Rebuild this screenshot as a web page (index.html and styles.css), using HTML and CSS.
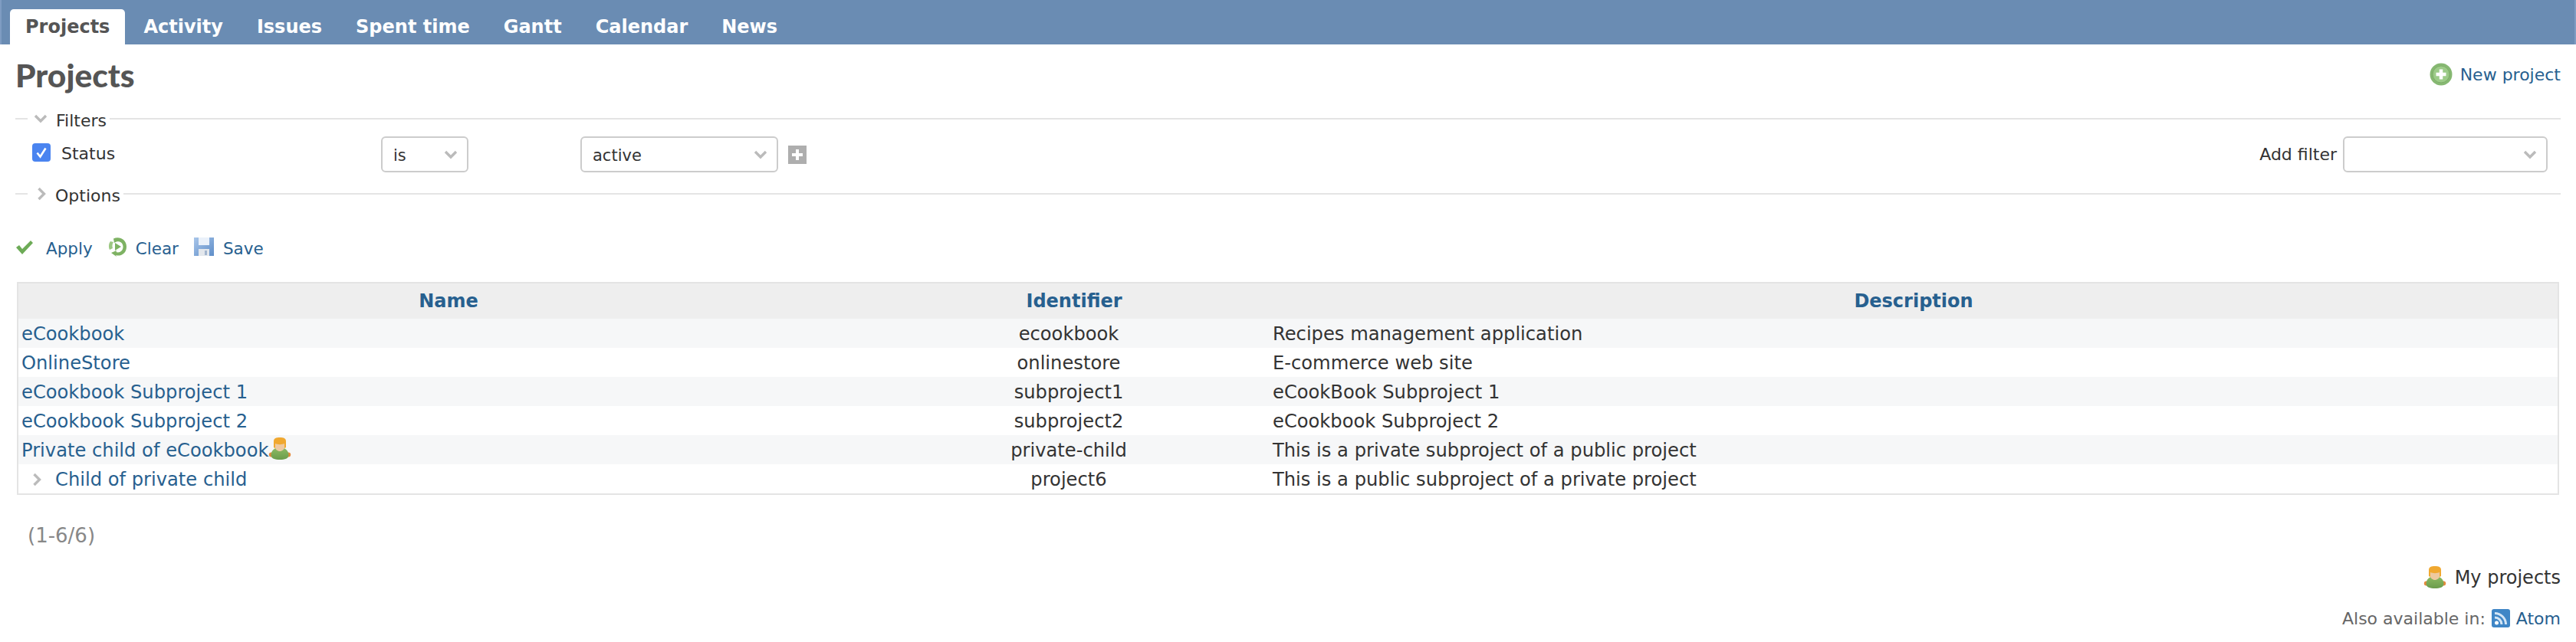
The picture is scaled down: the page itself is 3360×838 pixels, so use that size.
FILE: index.html
```html
<!DOCTYPE html>
<html lang="en">
<head>
<meta charset="utf-8">
<title>Projects</title>
<link rel="stylesheet" href="styles.css">
</head>
<body>
<svg class="defs" width="0" height="0" aria-hidden="true">
  <defs>
    <linearGradient id="g-body" x1="0" y1="0" x2="0" y2="1"><stop offset="0" stop-color="#8dbb63"/><stop offset="1" stop-color="#6b9c4c"/></linearGradient>
    <linearGradient id="g-save" x1="0" y1="0" x2="1" y2="1"><stop offset="0" stop-color="#a9c6ea"/><stop offset="1" stop-color="#5e8dc8"/></linearGradient>
    <symbol id="i-user" viewBox="0 0 30 30">
      <circle cx="3.800" cy="22.500" r="3" fill="#e58a3c"/>
      <circle cx="26.200" cy="22.500" r="3" fill="#e58a3c"/>
      <path d="M3.500 23c0-6 5-10 11.500-10s11.500 4 11.500 10c0 4.500-5 6-11.500 6s-11.500-1.500-11.500-6z" fill="url(#g-body)"/>
      <path d="M7 5c0-4 3-5 8-5s8 1 8 5v8c-2 2-14 2-16 0z" fill="#f0a830"/>
      <path d="M9 8c3 1.500 9 1.500 12 0v5c0 2.500-3 5-6 5s-6-2.500-6-5z" fill="#eec9a0"/>
    </symbol>
    <symbol id="i-chev-down" viewBox="0 0 18 12">
      <path d="M2 2l7 7 7-7" fill="none" stroke="#bbb" stroke-width="3.400"/>
    </symbol>
    <symbol id="i-chev-right" viewBox="0 0 12 18">
      <path d="M2.500 2l7 7-7 7" fill="none" stroke="#bbb" stroke-width="3.400"/>
    </symbol>
  </defs>
</svg>

<nav class="topbar">
  <a class="tab tab-active" href="#">Projects</a>
  <a class="tab" href="#">Activity</a>
  <a class="tab" href="#">Issues</a>
  <a class="tab" href="#">Spent time</a>
  <a class="tab" href="#">Gantt</a>
  <a class="tab" href="#">Calendar</a>
  <a class="tab" href="#">News</a>
</nav>

<main class="content">
  <header class="title-row">
    <h2 class="title">Projects</h2>
    <a class="link new-project" href="#">
      <svg class="ic-new" viewBox="0 0 30 30"><circle cx="15" cy="15" r="14.500" fill="#86b872"/><circle cx="15" cy="15" r="11" fill="#9ccb88" stroke="#7dad66"/><path d="M15 8.500v13M8.500 15h13" stroke="#fff" stroke-width="4.500"/></svg>
      New project
    </a>
  </header>

  <div class="legend"><svg class="chev-d"><use href="#i-chev-down"/></svg><span class="legend-text">Filters</span></div>
  <div class="filter-row">
    <label class="status"><span class="checkbox"><svg viewBox="0 0 24 24"><path d="M6.500 12.500l4 5 7-11" fill="none" stroke="#fff" stroke-width="2.600"/></svg></span>Status</label>
    <div class="sel sel-op"><select><option>is</option></select><svg class="sel-chev"><use href="#i-chev-down"/></svg></div>
    <div class="sel sel-val"><select><option>active</option></select><svg class="sel-chev"><use href="#i-chev-down"/></svg></div>
    <svg class="plus" viewBox="0 0 24 24"><rect width="24" height="24" fill="#aeaeae"/><path d="M12 5v14M5 12h14" stroke="#fff" stroke-width="4"/></svg>
    <div class="add-filter">Add filter<div class="sel sel-add"><select><option></option></select><svg class="sel-chev"><use href="#i-chev-down"/></svg></div></div>
  </div>
  <div class="legend legend-options"><svg class="chev-r"><use href="#i-chev-right"/></svg><span class="legend-text">Options</span></div>

  <div class="actions">
    <a class="link action" href="#"><svg class="ic-apply" viewBox="0 0 24 20"><path d="M1 10l4-3 4 5L20 1l3 3L9 19z" fill="#6dab57"/></svg>Apply</a>
    <a class="link action" href="#"><svg class="ic-clear" viewBox="0 0 26 26"><path d="M7 2.500C14-1 24 3 24 13s-9 13-14 11l1 2-7-5 7-3-.500 2c4 1.500 9-1 9-7S13 4 8 8z" fill="#7eb263"/><path d="M3 6C.500 9 .500 14 2 17l4-2c-1-3-.500-6 1-8z" fill="#9cc882"/><path d="M9 8l8 5-8 5z" fill="#7eb263"/></svg>Clear</a>
    <a class="link action" href="#"><svg class="ic-save" viewBox="0 0 26 24"><path d="M0 0h26v24H0z" fill="url(#g-save)"/><path d="M6 0h14v10H6z" fill="#eaf1fa"/><path d="M6 15h14v9H6z" fill="#e3e7ec"/><path d="M14 17h3v6h-3z" fill="#a3b6cf"/></svg>Save</a>
  </div>

  <table class="projects">
    <colgroup><col class="col-name"><col class="col-id"><col class="col-desc"></colgroup>
    <thead>
      <tr><th><a href="#">Name</a></th><th><a href="#">Identifier</a></th><th><a href="#">Description</a></th></tr>
    </thead>
    <tbody>
      <tr><td><a href="#">eCookbook</a></td><td class="id">ecookbook</td><td>Recipes management application</td></tr>
      <tr><td><a href="#">OnlineStore</a></td><td class="id">onlinestore</td><td>E-commerce web site</td></tr>
      <tr><td><a href="#">eCookbook Subproject 1</a></td><td class="id">subproject1</td><td>eCookBook Subproject 1</td></tr>
      <tr><td><a href="#">eCookbook Subproject 2</a></td><td class="id">subproject2</td><td>eCookbook Subproject 2</td></tr>
      <tr><td><a href="#">Private child of eCookbook</a><svg class="ic-user-row"><use href="#i-user"/></svg></td><td class="id">private-child</td><td>This is a private subproject of a public project</td></tr>
      <tr><td class="child"><svg class="chev-r"><use href="#i-chev-right"/></svg><a href="#">Child of private child</a></td><td class="id">project6</td><td>This is a public subproject of a private project</td></tr>
    </tbody>
  </table>

  <p class="pagination">(1-6/6)</p>
  <p class="my-projects"><svg class="ic-user-my"><use href="#i-user"/></svg>My projects</p>
  <p class="other-formats">Also available in:
    <svg class="ic-rss" viewBox="0 0 24 24"><rect width="24" height="24" rx="3" fill="#3f86c6"/><circle cx="6.500" cy="18" r="2.500" fill="#fff"/><path d="M4 11a9 9 0 0 1 9 9M4 5.500A14.500 14.500 0 0 1 18.500 20" fill="none" stroke="#d3e5f5" stroke-width="3"/></svg>
    <a class="link" href="#">Atom</a>
  </p>
</main>
</body>
</html>
```
FILE: styles.css
```css
* { box-sizing: border-box; }
html, body { margin: 0; padding: 0; }
body {
  background: #fff;
  color: #333;
  font-family: "DejaVu Sans", Verdana, sans-serif;
  font-size: 24px;
}
a { color: #27608f; text-decoration: none; }
.defs { position: absolute; }

.topbar {
  height: 58px;
  background: #6a8cb3;
  display: flex;
  align-items: flex-end;
  padding-left: 11px;
  border-left: 2px solid #7f9cc2;
  border-right: 2px solid #7f9cc2;
}
.tab {
  height: 46px;
  line-height: 47px;
  padding: 0 20px;
  margin-right: 4px;
  color: #fff;
  font-weight: bold;
}
.tab-active {
  background: #fff;
  color: #555;
  border-radius: 5px 5px 0 0;
}

.content { padding: 0 20px; }
.title-row {
  height: 82px;
  display: flex;
  justify-content: space-between;
  align-items: center;
}
.title {
  margin: -4px 0 0;
  font-family: Lato, "Open Sans", sans-serif;
  font-size: 42.500px;
  font-weight: 900;
  color: #555;
}
.new-project {
  display: flex;
  align-items: center;
  gap: 10px;
  font-size: 22px;
  margin-top: -4px;
}
.ic-new { width: 30px; height: 30px; }

.legend {
  height: 30px;
  display: flex;
  align-items: center;
  font-size: 22px;
}
.legend-text { padding-top: 4px; }
.legend::before {
  content: "";
  width: 16px;
  height: 2px;
  margin-right: 8px;
  background: #e4e4e4;
}
.legend::after {
  content: "";
  flex: 1;
  height: 2px;
  margin-left: 4px;
  background: #e4e4e4;
}
.chev-d { width: 18px; height: 12px; margin-right: 11px; }
.chev-r { width: 12px; height: 18px; margin: 0 12px 0 4px; }

.filter-row {
  margin-top: 8px;
  height: 47px;
  display: flex;
  align-items: center;
  padding-left: 22px;
  font-size: 22px;
}
.status {
  width: 455px;
  display: flex;
  align-items: center;
  margin-top: -3px;
}
.checkbox {
  width: 24px;
  height: 24px;
  margin-right: 14px;
  margin-top: -3px;
  border-radius: 4px;
  background: #4a84f0;
  display: flex;
}
.sel { position: relative; height: 47px; }
.sel select {
  width: 100%;
  height: 100%;
  appearance: none;
  background: #fff;
  border: 2px solid #ccc;
  border-radius: 6px;
  color: #333;
  font: inherit;
  font-size: 21px;
  padding: 3px 14px 0;
}
.sel-chev {
  position: absolute;
  right: 14px;
  top: 18px;
  width: 18px;
  height: 12px;
  pointer-events: none;
}
.sel-op { width: 114px; margin-right: 146px; }
.sel-val { width: 258px; margin-right: 13px; }
.sel-add { width: 267px; margin-left: 8px; }
.plus { width: 24px; height: 24px; }
.add-filter {
  margin-left: auto;
  margin-right: 17px;
  display: flex;
  align-items: center;
}

.legend-options { margin-top: 13px; }

.actions {
  margin-top: 40px;
  height: 30px;
  display: flex;
  align-items: center;
  gap: 20px;
  font-size: 21.500px;
}
.action { display: flex; align-items: center; padding-top: 3px; }
.ic-apply { width: 24px; height: 20px; margin-right: 16px; margin-top: -3px; }
.ic-clear { width: 26px; height: 26px; margin-right: 10px; margin-top: -5px; }
.ic-save { width: 26px; height: 24px; margin-right: 12px; margin-top: -5px; }

.projects {
  margin: 30px 2px 0;
  width: 3316px;
  table-layout: fixed;
  border-collapse: separate;
  border-spacing: 0;
  border: 2px solid #e4e4e4;
}
.col-name { width: 1122px; }
.col-id { width: 510px; }
.projects th {
  height: 46px;
  background: #eee;
  font-weight: bold;
}
.projects td {
  height: 38px;
  padding: 2px 4px 0;
  white-space: nowrap;
  font-size: 24.200px;
}
.projects tbody tr:nth-child(odd) { background: #f6f7f8; }
.projects td.id { text-align: center; padding-right: 18px; }
.ic-user-row { width: 30px; height: 30px; vertical-align: 3px; margin: -8px 0; }
.ic-user-my { width: 30px; height: 30px; margin-right: 11px; }
.child .chev-r { vertical-align: 3px; margin: -4px 18px -4px 14px; }

.pagination {
  margin: 38px 0 0 16px;
  height: 30px;
  line-height: 30px;
  font-size: 26px;
  color: #888;
}
.my-projects {
  margin: 25px 0 0;
  height: 30px;
  display: flex;
  justify-content: flex-end;
  align-items: center;
}
.other-formats {
  margin: 23px 0 0;
  height: 30px;
  font-size: 22px;
  color: #666;
  display: flex;
  justify-content: flex-end;
  align-items: center;
  gap: 8px;
}
.ic-rss { width: 24px; height: 24px; }
```
